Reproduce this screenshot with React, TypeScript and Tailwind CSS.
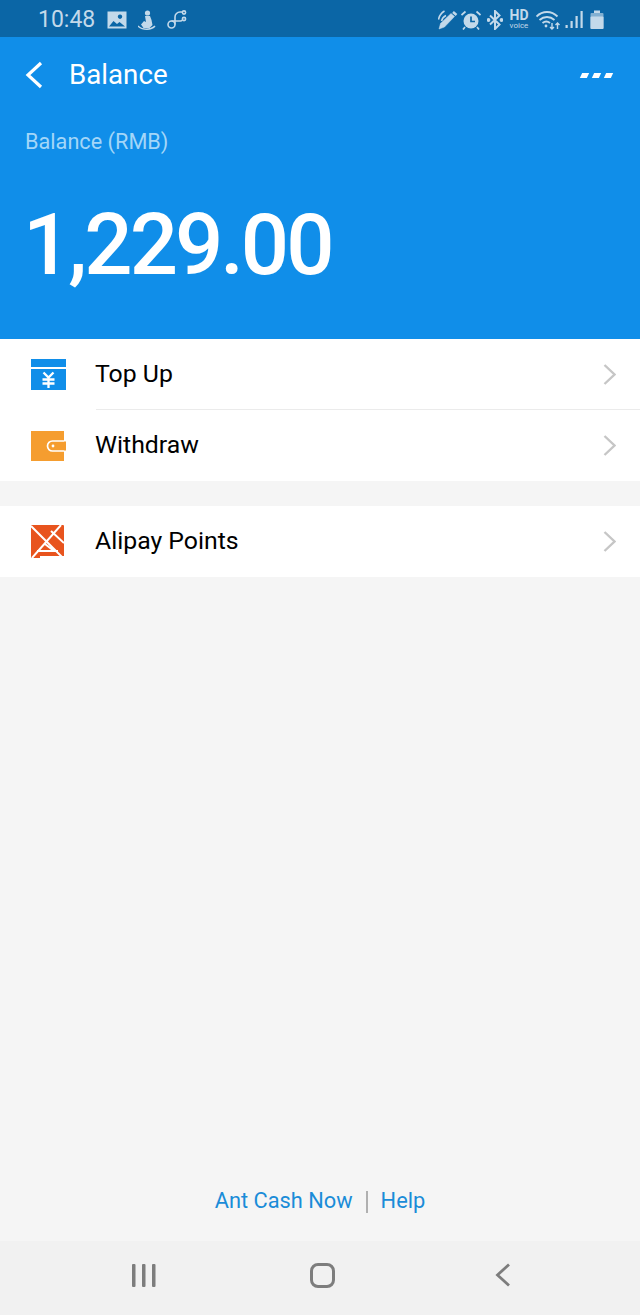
const roboto = { fontFamily: 'Roboto, sans-serif' }

// Status bar glyphs
function ImageGlyph() {
  return (
    <svg width="20" height="18" viewBox="0 0 20 18">
      <path fillRule="evenodd" d="M0.500 0.500h19v17h-19zM13 3.500a2.200 2.200 0 1 0 .01 0zM2 15.500l4.500-5.500 3.500 3 2.500-2 5.500 4.500z" fill="#c3d9ea" />
    </svg>
  )
}

function FigureGlyph() {
  return (
    <svg width="18" height="20" viewBox="0 0 18 20" fill="#c3d9ea">
      <circle cx="9.500" cy="3" r="2.600" />
      <path d="M7 6h5l1.500 4 1 5-3 3H5.500L3 14.500 6 11l2 1z" />
      <path d="M0.500 15.500c3 4 12 4 16 0l1 1c-3 4.500-14 4.500-18 0z" />
    </svg>
  )
}

function LoopGlyph() {
  return (
    <svg width="20" height="20" viewBox="0 0 20 20" fill="none" stroke="#c3d9ea" strokeWidth="1.600">
      <circle cx="4.500" cy="14.500" r="3.500" />
      <path d="M8 14.500V7a5 5 0 0 1 5-5h2.500M4.500 11h9a4 4 0 0 0 2-.8" />
      <circle cx="17" cy="2.500" r="1.600" />
      <circle cx="17" cy="9" r="1.600" />
    </svg>
  )
}

function PenGlyph() {
  return (
    <svg width="20" height="20" viewBox="0 0 20 20" fill="none" stroke="#c3d9ea">
      <path d="M1 19l1.500-5.500L13 3.500l3.500 3L6.500 17z" fill="#c3d9ea" strokeWidth="0.500" />
      <path d="M15 2l3.500 3" strokeWidth="2.500" />
      <path d="M0.500 9.500Q1.500 4 6.500 1M3.500 11q1-4 4.500-5.500" strokeWidth="1.500" />
    </svg>
  )
}

function AlarmGlyph() {
  return (
    <svg width="20" height="20" viewBox="0 0 20 20" fill="none">
      <circle cx="10" cy="11" r="7.500" fill="#c3d9ea" />
      <path d="M10 6.500V11.500h4" stroke="#0b66a6" strokeWidth="1.700" />
      <path d="M0.500 5l4-3.500M19.500 5l-4-3.500M4 17l-2 2.500M16 17l2 2.500" stroke="#c3d9ea" strokeWidth="1.700" />
    </svg>
  )
}

function BluetoothGlyph() {
  return (
    <svg width="16" height="20" viewBox="0 0 16 20" fill="none" stroke="#c3d9ea" strokeWidth="2">
      <path d="M3 5.500l9.500 9L8 19V1l4.500 4.500L3 14.500" />
      <circle cx="1.500" cy="10" r="0.900" fill="#c3d9ea" />
      <circle cx="14.500" cy="10" r="0.900" fill="#c3d9ea" />
    </svg>
  )
}

function WifiGlyph() {
  return (
    <svg width="24" height="20" viewBox="0 0 24 20" fill="none" stroke="#c3d9ea" strokeWidth="1.800">
      <path d="M0.500 6.500c6-6 15-6 21 0M3.500 10c4.500-4 10.500-4 15 0M6.500 13c2.500-2 5-2 7.500 0" />
      <circle cx="10" cy="16" r="1.400" fill="#c3d9ea" stroke="none" />
      <path d="M16 13v6M14 17l2 2 2-2M21.500 19v-6M19.500 15l2-2 2 2" strokeWidth="1.400" />
    </svg>
  )
}

function SignalGlyph() {
  return (
    <svg width="18" height="20" viewBox="0 0 18 20" fill="#c3d9ea">
      <rect x="0.500" y="15" width="2.200" height="3" />
      <rect x="5.500" y="11" width="2.200" height="7" />
      <rect x="10.500" y="6" width="2.200" height="12" />
      <rect x="15.500" y="1" width="2.200" height="17" />
    </svg>
  )
}

function BatteryGlyph() {
  return (
    <svg width="14" height="20" viewBox="0 0 14 20" fill="#c3d9ea">
      <rect x="4" y="0.500" width="6" height="2.500" />
      <rect x="0.500" y="3" width="13" height="16" rx="1" opacity="0.650" />
      <rect x="0.500" y="6.500" width="13" height="12.500" rx="1" />
    </svg>
  )
}

// Row icons
function TopUpIcon() {
  return (
    <svg width="35" height="31" viewBox="0 0 35 31">
      <rect x="0" y="0" width="35" height="8" fill="#108ee9" />
      <rect x="0" y="10" width="35" height="21" fill="#108ee9" />
      <path d="M12.500 13.500l5 5 5-5M17.500 18v11M11.500 20.500h12M11.500 24.500h12" fill="none" stroke="#fff" strokeWidth="2.300" />
    </svg>
  )
}

function WithdrawIcon() {
  return (
    <svg width="35" height="30" viewBox="0 0 35 30">
      <path d="M0 0h33v30H0z" fill="#f59d2f" />
      <path d="M35 10.500H21.500a4.500 4.500 0 0 0 0 9H35z" fill="#f59d2f" />
      <path d="M33 10H21.500a5 5 0 0 0 0 10H33" fill="none" stroke="#fff" strokeWidth="1.700" />
      <path d="M33 11h2v8h-2z" fill="#f59d2f" />
      <circle cx="22" cy="15" r="1.400" fill="#fff" />
    </svg>
  )
}

function PointsIcon() {
  return (
    <svg width="33" height="33" viewBox="0 0 33 33">
      <rect x="0" y="0" width="33" height="33" rx="1" fill="#e8541e" />
      <path d="M0 1l32 32M30 0L1 33M6 26h21M20 6l13 12M14 19l9 7M9 32h24" fill="none" stroke="#fff" strokeWidth="2" />
    </svg>
  )
}

function Row({ icon, label, divider }: { icon: React.ReactNode; label: string; divider?: boolean }) {
  return (
    <div className="h-[71px] flex items-center relative">
      <div className="w-[95px] pl-[31px] shrink-0">{icon}</div>
      <div className="text-[24.8px] text-black flex-1 pb-[1px]">{label}</div>
      <svg className="mr-[24px]" width="13" height="21" viewBox="0 0 13 21" fill="none" stroke="#c6c6c6" strokeWidth="2.400">
        <path d="M1.500 1L11.500 10.500 1.500 20" />
      </svg>
      {divider && <div className="absolute left-[96px] right-0 bottom-0 h-px bg-[#ebebeb]" />}
    </div>
  )
}

export default function App() {
  return (
    <div className="w-[640px] h-[1315px] flex flex-col bg-[#f5f5f5] overflow-hidden" style={roboto}>
      <div className="h-[37px] bg-[#0b66a6] flex items-center justify-between pl-[38px] pr-[36px] pt-[2px]">
        <div className="flex items-center">
          <span className="text-[23px] leading-none text-[#c3d9ea] w-[69px]">10:48</span>
          <div className="flex items-center gap-[11px]">
            <ImageGlyph />
            <FigureGlyph />
            <LoopGlyph />
          </div>
        </div>
        <div className="flex items-center">
          <PenGlyph />
          <div className="ml-[3px]">
            <AlarmGlyph />
          </div>
          <div className="ml-[6px]">
            <BluetoothGlyph />
          </div>
          <div className="w-[22px] ml-[5px] flex flex-col items-center text-[#c3d9ea] font-bold">
            <span className="text-[14px] leading-[13px]">HD</span>
            <span className="text-[8px] leading-[8px] font-normal">voice</span>
          </div>
          <div className="ml-[6px]">
            <WifiGlyph />
          </div>
          <div className="ml-[5px]">
            <SignalGlyph />
          </div>
          <div className="ml-[7px]">
            <BatteryGlyph />
          </div>
        </div>
      </div>
      <div className="h-[302px] bg-[#108ee9] text-white">
        <div className="h-[74px] flex items-center justify-between pl-[22px] pr-[28px] pt-[2px]">
          <div className="flex items-center">
            <svg width="24" height="28" viewBox="0 0 24 28" fill="none" stroke="#fff" strokeWidth="3.200">
              <path d="M19 2L6 14l13 12" />
            </svg>
            <span className="ml-[23px] text-[27.7px]">Balance</span>
          </div>
          <div className="flex gap-[5px]">
            <span className="w-[7px] h-[5px] bg-white -skew-x-[25deg]" />
            <span className="w-[7px] h-[5px] bg-white -skew-x-[25deg]" />
            <span className="w-[7px] h-[5px] bg-white -skew-x-[25deg]" />
          </div>
        </div>
        <div className="pl-[25px] mt-[15px] text-[21.7px] leading-[32px] text-[#a3d6f8]">Balance (RMB)</div>
        <div className="pl-[23px] mt-[39px] text-[85px] leading-[96px] font-medium tracking-[-3px]">1,229.00</div>
      </div>
      <div className="bg-white">
        <Row icon={<TopUpIcon />} label="Top Up" divider />
        <Row icon={<WithdrawIcon />} label="Withdraw" />
      </div>
      <div className="bg-white mt-[25px]">
        <Row icon={<PointsIcon />} label="Alipay Points" />
      </div>
      <div className="flex-1 flex items-end justify-center pb-[24px] text-[21.8px] leading-[32px] text-[#1a8cd8]">
        <span>Ant Cash Now</span>
        <span className="w-[2px] h-[22px] bg-[#b0b0b0] mx-[13px] mb-[4px]" />
        <span>Help</span>
      </div>
      <div className="h-[74px] bg-[#f1f1f1] flex items-center justify-between pl-[132px] pr-[129px] pb-[6px]">
        <svg width="24" height="24" viewBox="0 0 24 24" fill="#7d7d7d">
          <rect x="0" y="1" width="3.500" height="23" rx="1" />
          <rect x="10" y="1" width="3.500" height="23" rx="1" />
          <rect x="20" y="1" width="3.500" height="23" rx="1" />
        </svg>
        <div className="w-[25px] h-[25px] border-[3px] border-[#7d7d7d] rounded-[8px] -ml-[6px]" />
        <svg width="16" height="24" viewBox="0 0 16 24" fill="none" stroke="#7d7d7d" strokeWidth="2.800">
          <path d="M14 1.500L2.500 12 14 22.500" />
        </svg>
      </div>
    </div>
  )
}
